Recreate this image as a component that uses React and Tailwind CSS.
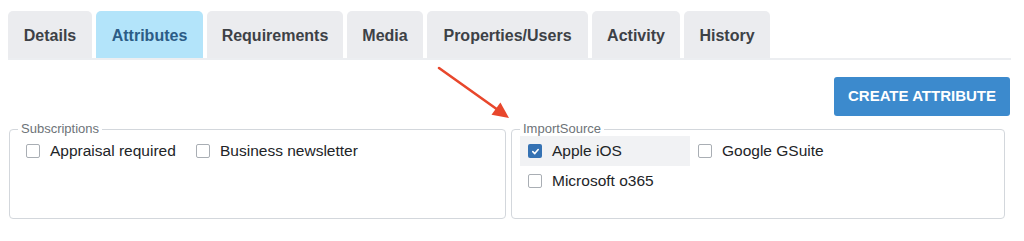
import React from "react";

const tabs = [
  { label: "Details", w: "w-[84px]" },
  { label: "Attributes", w: "w-[107px]" },
  { label: "Requirements", w: "w-[136px]" },
  { label: "Media", w: "w-[76px]" },
  { label: "Properties/Users", w: "w-[161px]" },
  { label: "Activity", w: "w-[88px]" },
  { label: "History", w: "w-[86px]" },
];

function Checkbox({ checked }) {
  if (checked) {
    return (
      <span className="flex items-center justify-center w-[14px] h-[14px] rounded-[2px] bg-[#3572b3] shrink-0">
        <svg width="9" height="9" viewBox="0 0 10 10">
          <path d="M2 5.2 L4.2 7.3 L8 2.8" fill="none" stroke="white" strokeWidth="1.8" strokeLinecap="round" strokeLinejoin="round" />
        </svg>
      </span>
    );
  }
  return <span className="w-[14px] h-[14px] rounded-[2px] border border-[#a9aeb4] bg-white shrink-0" />;
}

function Option({ label, checked, active }) {
  return (
    <div className={`flex items-center gap-[10px] h-[30px] w-[170px] px-2 ${active ? "bg-[#f1f2f4]" : ""}`}>
      <Checkbox checked={checked} />
      <span className="text-[15.5px] text-[#222427] whitespace-nowrap">{label}</span>
    </div>
  );
}

function Group({ title, children }) {
  return (
    <fieldset className="h-[97px] border border-[#d3d7dc] rounded-[4px] px-2">
      <legend className="px-[3px] text-[13px] leading-[14px] text-[#6d7378]">{title}</legend>
      <div className="grid grid-cols-[170px_170px]">{children}</div>
    </fieldset>
  );
}

export default function App() {
  return (
    <div className="relative w-[1024px] h-[241px] bg-white font-['Liberation_Sans',Arial,sans-serif]">
      <div className="ml-2 w-[1003px] pt-[11px]">
        <div className="flex gap-1 border-b-2 border-[#eceef1]">
          {tabs.map((t) => (
            <div
              key={t.label}
              className={`${t.w} h-[47px] pt-[2px] flex items-center justify-center rounded-t-[5px] text-[16px] font-bold whitespace-nowrap ${
                t.label === "Attributes" ? "bg-[#b3e4fa] text-[#2c5c86]" : "bg-[#ebecef] text-[#3d4146]"
              }`}
            >
              {t.label}
            </div>
          ))}
        </div>

        <div className="flex justify-end mt-[17px] pr-[1px]">
          <button className="w-[176px] h-[39px] rounded-[3px] bg-[#3c8acd] text-white text-[15px] font-bold">
            CREATE ATTRIBUTE
          </button>
        </div>

        <div className="grid grid-cols-[497px_494px] gap-[5px] ml-[1px] mt-[6px]">
          <Group title="Subscriptions">
            <Option label="Appraisal required" />
            <Option label="Business newsletter" />
          </Group>
          <Group title="ImportSource">
            <Option label="Apple iOS" checked active />
            <Option label="Google GSuite" />
            <Option label="Microsoft o365" />
          </Group>
        </div>
      </div>

      <svg className="absolute left-[430px] top-[60px]" width="90" height="70" viewBox="0 0 90 70">
        <line x1="9" y1="8" x2="68" y2="50" stroke="#e8472c" strokeWidth="2.6" strokeLinecap="round" />
        <polygon points="79,58 61.5,54.8 70.4,42.6" fill="#e8472c" />
      </svg>
    </div>
  );
}
